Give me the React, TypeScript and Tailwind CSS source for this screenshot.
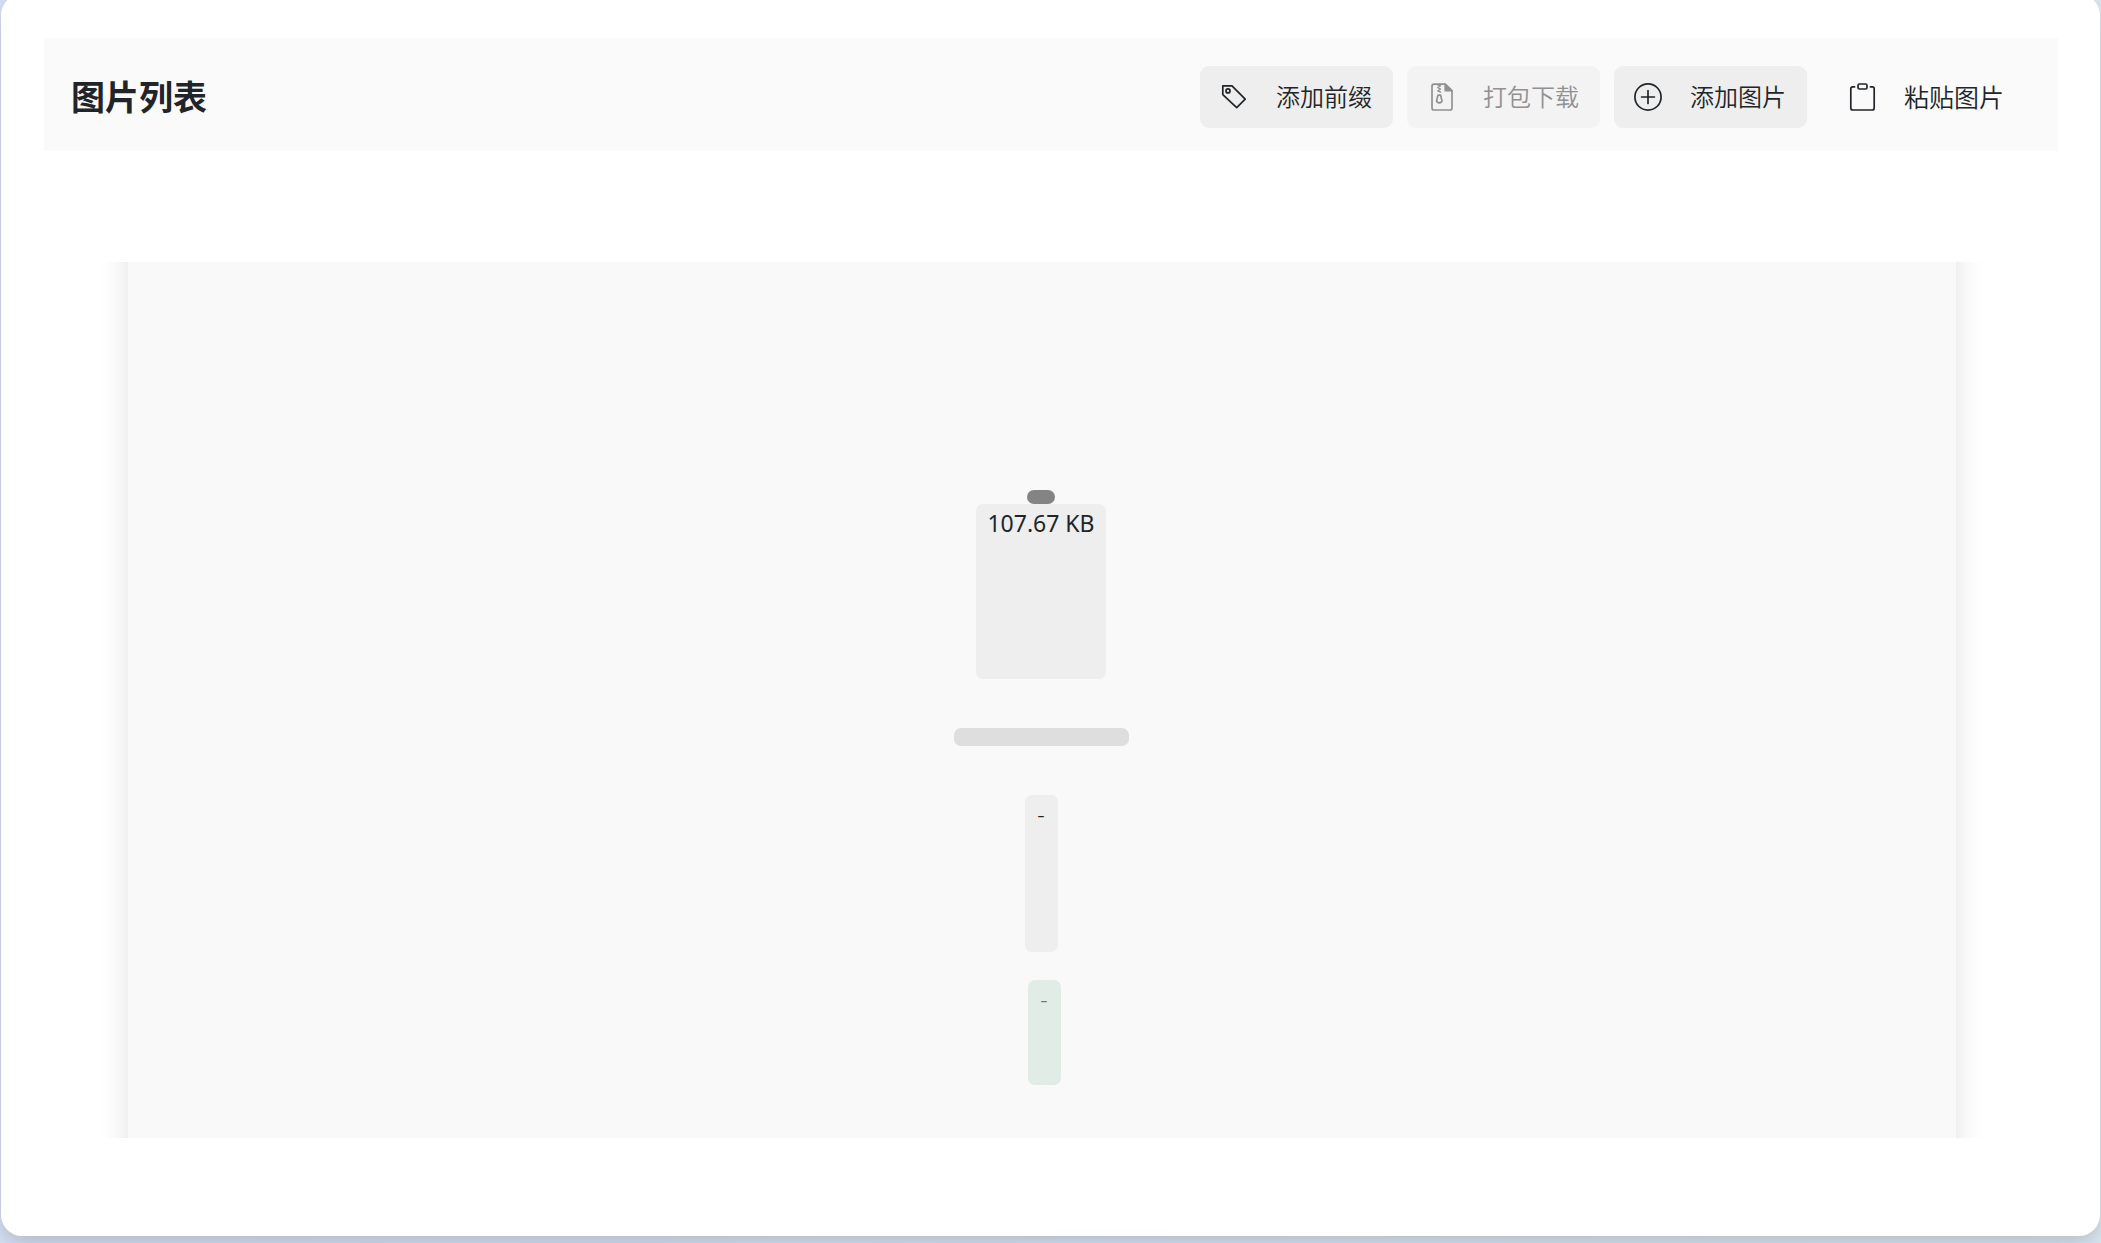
import type { ReactNode } from "react";

function Icon({ children }: { children: ReactNode }) {
  return (
    <svg
      viewBox="0 0 28 28"
      className="size-7 shrink-0"
      fill="none"
      stroke="currentColor"
      strokeWidth="1.7"
      strokeLinecap="round"
      strokeLinejoin="round"
      aria-hidden="true"
    >
      {children}
    </svg>
  );
}

function TagIcon() {
  return (
    <Icon>
      <path d="M2.8 2.9H12L25.2 16.1L16.7 24.6L2.8 11.6Z" />
      <circle cx="8" cy="7.9" r="2" />
    </Icon>
  );
}

function ZipIcon() {
  return (
    <Icon>
      <path d="M17.8 1.2H7A2 2 0 0 0 5 3.2V25A2 2 0 0 0 7 27H23A2 2 0 0 0 25 25V7.8Z" />
      <path d="M18.2 1.2V7.6H25Z" fill="currentColor" />
      <path d="M10.2 1.6L13.6 2.8L10.8 4.6L13.6 6L10.8 7.8L13.6 9.2" strokeWidth="1.3" />
      <path d="M11 12.2H13.6L15 17.6C15 20.6 9.6 20.6 9.6 17.6Z" strokeWidth="1.7" />
    </Icon>
  );
}

function PlusIcon() {
  return (
    <Icon>
      <circle cx="14" cy="14" r="13.1" />
      <path d="M14 7.6V20.4M7.6 14H20.4" />
    </Icon>
  );
}

function ClipboardIcon() {
  return (
    <Icon>
      <path d="M6.6 3.8H4.8A2 2 0 0 0 2.8 5.8V25A2 2 0 0 0 4.8 27H24.2A2 2 0 0 0 26.2 25V5.8A2 2 0 0 0 24.2 3.8H22.4" />
      <rect x="10" y="1" width="9" height="5" rx="1.4" />
    </Icon>
  );
}

function ToolButton({
  icon,
  children,
  plain = false,
  disabled = false,
}: {
  icon: ReactNode;
  children: ReactNode;
  plain?: boolean;
  disabled?: boolean;
}) {
  return (
    <button
      type="button"
      disabled={disabled}
      className={
        "flex h-[62px] items-center gap-7 rounded-[9px] leading-8 font-[350] whitespace-nowrap " +
        (plain
          ? "bg-transparent px-[27px] text-[25px]"
          : disabled
            ? "min-w-[193px] bg-[#f3f3f3] px-5 text-[24px] text-[#909192]"
            : "min-w-[193px] bg-[#eeeeee] px-5 text-[24px]")
      }
    >
      {icon}
      <span>{children}</span>
    </button>
  );
}

export default function App() {
  return (
    <div className="flex min-h-screen flex-col overflow-hidden bg-linear-to-r from-[#d9e4f8] to-[#deeaf5] px-px pb-[7px] font-['Noto_Sans','Noto_Sans_CJK_SC',sans-serif] text-[#212529]">
      <main className="-mt-1.5 flex grow flex-col rounded-[21px] bg-white px-[42px] pt-11 pb-[98px] shadow-[0_8px_24px_rgba(0,0,0,0.2)]">
        <header className="ml-px flex h-[113px] items-center justify-between bg-[#fafafa] px-[27px] pt-1">
          <h1 className="text-[34px] leading-10 font-bold">图片列表</h1>
          <div className="flex gap-3.5">
            <ToolButton icon={<TagIcon />}>添加前缀</ToolButton>
            <ToolButton icon={<ZipIcon />} disabled>
              打包下载
            </ToolButton>
            <ToolButton icon={<PlusIcon />}>添加图片</ToolButton>
            <ToolButton icon={<ClipboardIcon />} plain>
              粘贴图片
            </ToolButton>
          </div>
        </header>

        <section className="mt-[111px] flex grow flex-col overflow-hidden pr-[102px] pl-[85px]">
          <div className="-my-7 flex grow flex-col items-center bg-[#f9f9f9] pt-[256px] pr-0.5 pb-[81px] text-[23px] leading-[30px] shadow-[0_0_28px_rgba(0,0,0,0.12)]">
            <div className="h-3.5 w-7 rounded-full bg-[#848484]" />
            <div className="h-[175px] rounded-[7px] bg-[#eeeeee] px-[11px] pt-1">107.67 KB</div>
            <div className="mt-[49px] h-[18px] w-[175px] rounded-[7px] bg-[#dedede]" />
            <div className="mt-[49px] h-[157px] w-[33px] rounded-[7px] bg-[#eeeeee] pt-1 text-center font-light">
              -
            </div>
            <div className="mt-7 ml-1.5 h-[105px] w-[33px] rounded-[7px] bg-[#e2ece7] pt-1 text-center font-light text-[#6c757d]">
              -
            </div>
          </div>
        </section>
      </main>
    </div>
  );
}
